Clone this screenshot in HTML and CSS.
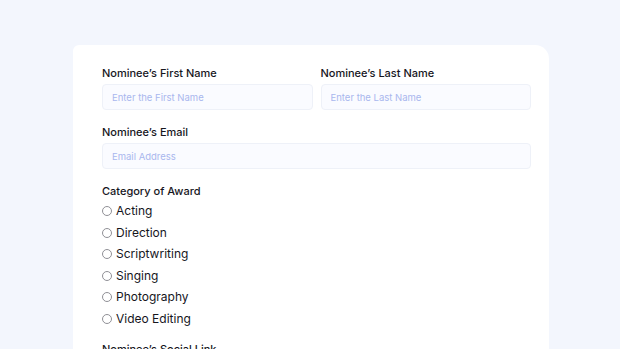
FILE: index.html
```html
<!DOCTYPE html>
<html lang="en">
<head>
  <meta charset="UTF-8">
  <title>Nomination Form</title>
  <link rel="stylesheet" href="styles.css">
</head>
<body>
<div class="page">
  <form class="card">
    <div class="row">
      <div class="field">
        <label for="firstName">Nominee’s First Name</label>
        <input id="firstName" type="text" placeholder="Enter the First Name">
      </div>
      <div class="field">
        <label for="lastName">Nominee’s Last Name</label>
        <input id="lastName" type="text" placeholder="Enter the Last Name">
      </div>
    </div>
    <div class="field">
      <label for="email">Nominee’s Email</label>
      <input id="email" type="email" placeholder="Email Address">
    </div>
    <div class="field">
      <span class="group-title">Category of Award</span>
      <div class="options">
        <label class="option"><span class="radio"></span>Acting</label>
        <label class="option"><span class="radio"></span>Direction</label>
        <label class="option"><span class="radio"></span>Scriptwriting</label>
        <label class="option"><span class="radio"></span>Singing</label>
        <label class="option"><span class="radio"></span>Photography</label>
        <label class="option"><span class="radio"></span>Video Editing</label>
      </div>
    </div>
    <div class="field">
      <label for="social">Nominee’s Social Link</label>
    </div>
  </form>
</div>
</body>
</html>
```

FILE: styles.css
```css
body {
  margin: 0;
  background-color: #f3f6fd;
  font-family: Inter, "Liberation Sans", sans-serif;
  color: #16161d;
}

.page {
  height: 349px;
  overflow: hidden;
  padding: 45px 71px 0 73px;
}

.card {
  background-color: #fff;
  border-radius: 6px 14px 0 0;
  padding: 21px 18px 40px 29px;
  display: flex;
  flex-direction: column;
  gap: 15px;
}

.row {
  display: flex;
  gap: 8px;
}

.row .field {
  flex: 1;
}

.field {
  display: flex;
  flex-direction: column;
  gap: 4px;
}

.field label,
.group-title {
  font-size: 11px;
  font-weight: 500;
  line-height: 14px;
}

input {
  height: 26px;
  box-sizing: border-box;
  border: 1px solid #eef1f8;
  border-radius: 4px;
  background-color: #fafbff;
  padding: 0 9px;
  font-family: Inter, "Liberation Sans", sans-serif;
  font-size: 9.5px;
  color: #16161d;
}

input::placeholder {
  color: #a9b7ee;
}

.options {
  display: flex;
  flex-direction: column;
  gap: 5px;
  padding-top: 1px;
}

.field .option {
  display: flex;
  align-items: center;
  gap: 4px;
  font-size: 12px;
  font-weight: 400;
  line-height: 16.5px;
}

.radio {
  width: 8px;
  height: 8px;
  border: 1px solid #909096;
  border-radius: 50%;
}
```
